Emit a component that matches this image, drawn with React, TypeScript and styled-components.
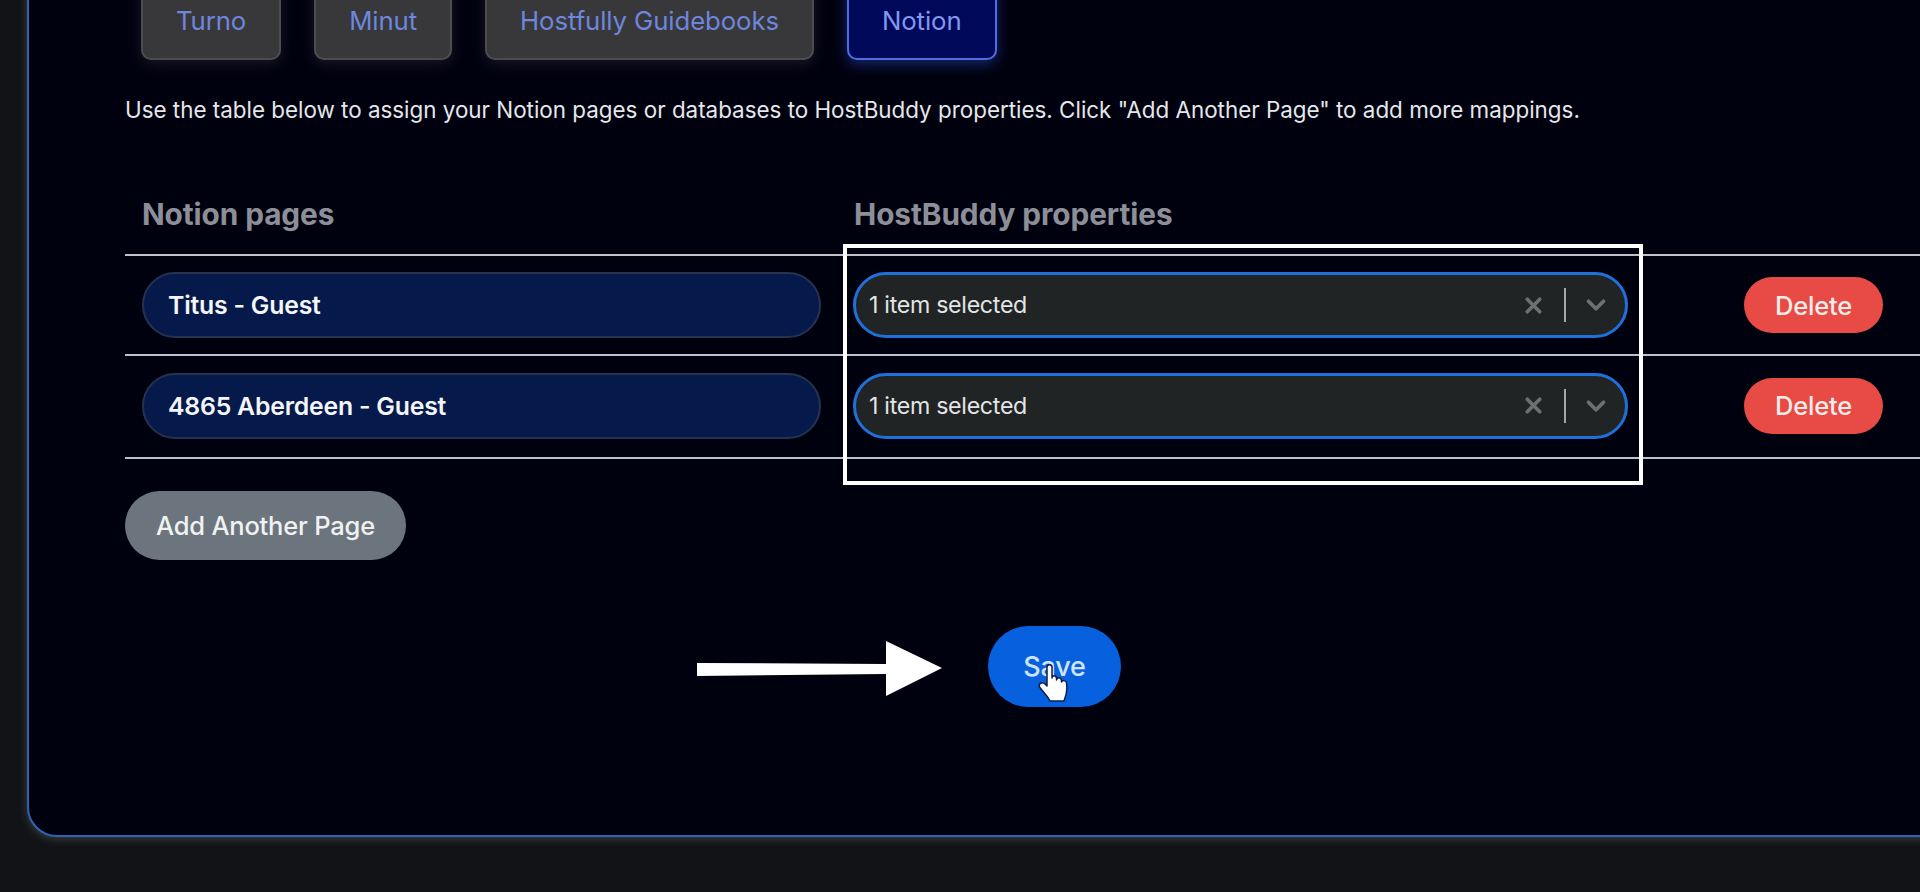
import { X, ChevronDown } from "lucide-react"
import styled, { createGlobalStyle } from "styled-components"

const GlobalStyle = createGlobalStyle`
  html, body {
    margin: 0;
    background: #111316;
  }
  * {
    box-sizing: border-box;
  }
`

const Viewport = styled.div`
  width: 1920px;
  height: 892px;
  overflow: hidden;
  background: #111316;
  font-family: Inter, "Liberation Sans", sans-serif;
  color: #fff;
`

const Panel = styled.main`
  position: relative;
  height: 917px;
  margin: -80px -60px 0 27px;
  padding: 0 0 0 96px;
  background: #00010f;
  border: 2px solid #2f62b4;
  border-radius: 30px;
  box-shadow: 0 2px 10px rgba(170, 180, 170, 0.28);
`

const Tabs = styled.nav`
  display: flex;
  gap: 33px;
  padding-left: 16px;
`

const Tab = styled.div<{ $active?: boolean }>`
  display: flex;
  align-items: flex-end;
  height: 138px;
  padding: 0 33px 21px;
  font-size: 25.75px;
  line-height: 32px;
  letter-spacing: -0.1px;
  border-radius: 10px;
  border: 2px solid ${(p) => (p.$active ? "#4f6ee0" : "#4b4c50")};
  background: ${(p) => (p.$active ? "#00085a" : "#38383a")};
  color: ${(p) => (p.$active ? "#8297f0" : "#6e86dd")};
  box-shadow: 0 4px 14px ${(p) => (p.$active ? "rgba(50, 90, 230, 0.45)" : "rgba(120, 120, 130, 0.2)")};
`

const Intro = styled.p`
  margin: 35px 0 0;
  font-size: 22.4px;
  line-height: 30px;
  color: #e6e7ea;
`

const HeaderRow = styled.div`
  display: grid;
  grid-template-columns: 679px 1fr;
  column-gap: 33px;
  margin-top: 71px;
  padding: 0 0 22px 17px;
`

const HeaderCell = styled.div`
  font-size: 29.8px;
  line-height: 36px;
  font-weight: 700;
  letter-spacing: -0.1px;
  color: #8d8f98;
`

const Row = styled.div<{ $height: number; $lift?: number }>`
  display: grid;
  grid-template-columns: 679px 775px 139px;
  column-gap: 32px;
  align-items: center;
  height: ${(p) => p.$height}px;
  padding: 0 0 ${(p) => p.$lift ?? 0}px 17px;
  border-top: 2px solid #bfc1c9;
`

const RowEnd = styled.div`
  border-top: 2px solid #bfc1c9;
`

const PageName = styled.div`
  display: flex;
  align-items: center;
  height: 66px;
  padding-left: 24px;
  font-size: 24.8px;
  font-weight: 600;
  letter-spacing: -0.2px;
  color: #f4f5f8;
  background: #051a4a;
  border: 2px solid #26324f;
  border-radius: 33px;
`

const Select = styled.div`
  display: flex;
  align-items: center;
  height: 66px;
  padding: 0 14px 0 13px;
  font-size: 23.2px;
  letter-spacing: -0.3px;
  color: #e4e5e6;
  background: #212425;
  border: 3px solid #2070dc;
  border-radius: 33px;
`

const SelectText = styled.span`
  flex: 1;
`

const Clear = styled(X)`
  width: 25px;
  height: 25px;
  margin-right: 18px;
  color: #6d7072;
`

const Divider = styled.span`
  width: 2px;
  height: 34px;
  background: #a4a6a8;
`

const Caret = styled(ChevronDown)`
  width: 30px;
  height: 30px;
  margin-left: 15px;
  color: #6d7072;
`

const DeleteButton = styled.button`
  justify-self: start;
  margin-left: 84px;
  width: 139px;
  height: 56px;
  padding: 0;
  border: 0;
  border-radius: 28px;
  font: 500 25.5px Inter, "Liberation Sans", sans-serif;
  letter-spacing: -0.2px;
  color: #f6ecea;
  background: #e84b45;
`

const AddButton = styled.button`
  display: block;
  width: 281px;
  height: 69px;
  margin-top: 32px;
  padding: 0;
  border: 0;
  border-radius: 35px;
  font: 500 25.5px Inter, "Liberation Sans", sans-serif;
  letter-spacing: -0.2px;
  color: #f0f2f2;
  background: #6c757d;
`

const SaveButton = styled.button`
  display: block;
  width: 133px;
  height: 81px;
  margin: 66px 0 0 863px;
  padding: 0;
  border: 0;
  border-radius: 41px;
  font: 500 27px Inter, "Liberation Sans", sans-serif;
  letter-spacing: -0.2px;
  color: #cfe3fb;
  background: #0760de;
`

const Highlight = styled.div`
  position: absolute;
  left: 814px;
  top: 322px;
  width: 800px;
  height: 241px;
  border: 4px solid #fff;
  pointer-events: none;
`

const ArrowMark = styled.svg`
  position: absolute;
  left: 668px;
  top: 719px;
  width: 245px;
  height: 56px;
`

const HandCursor = styled.svg`
  position: absolute;
  left: 1009px;
  top: 741px;
  width: 32px;
  height: 40px;
`

export default function App() {
  return (
    <Viewport>
      <GlobalStyle />
      <Panel>
        <Tabs>
          <Tab>Turno</Tab>
          <Tab>Minut</Tab>
          <Tab>Hostfully Guidebooks</Tab>
          <Tab $active>Notion</Tab>
        </Tabs>
        <Intro>
          Use the table below to assign your Notion pages or databases to HostBuddy properties. Click "Add Another Page" to add more mappings.
        </Intro>
        <HeaderRow>
          <HeaderCell>Notion pages</HeaderCell>
          <HeaderCell>HostBuddy properties</HeaderCell>
        </HeaderRow>
        <Row $height={100}>
          <PageName>Titus - Guest</PageName>
          <Select>
            <SelectText>1 item selected</SelectText>
            <Clear strokeWidth={3.5} />
            <Divider />
            <Caret strokeWidth={3} />
          </Select>
          <DeleteButton>Delete</DeleteButton>
        </Row>
        <Row $height={103} $lift={2}>
          <PageName>4865 Aberdeen - Guest</PageName>
          <Select>
            <SelectText>1 item selected</SelectText>
            <Clear strokeWidth={3.5} />
            <Divider />
            <Caret strokeWidth={3} />
          </Select>
          <DeleteButton>Delete</DeleteButton>
        </Row>
        <RowEnd />
        <AddButton>Add Another Page</AddButton>
        <SaveButton>Save</SaveButton>
        <Highlight />
        <ArrowMark viewBox="0 0 245 56">
          <path d="M0 22 L189 23 V0 L245 27 L189 55 V33 L0 35 Z" fill="#fff" />
        </ArrowMark>
        <HandCursor viewBox="0 0 32 40">
          <path
            d="M9 4 C9 1 14 1 14 4 V15 C14 12 18 12 18.500 15 V17 C19 14 23 14 23.500 17.500 V19 C24 17 28 17 28.500 20 C29.500 26 29 31 26 38 H12 C10 33 5 29 1.500 24 C0 21 4 18 7 21 L9 23 Z"
            fill="#fff"
            stroke="#0b1f4a"
            strokeWidth="1.5"
            strokeLinejoin="round"
          />
        </HandCursor>
      </Panel>
    </Viewport>
  )
}
